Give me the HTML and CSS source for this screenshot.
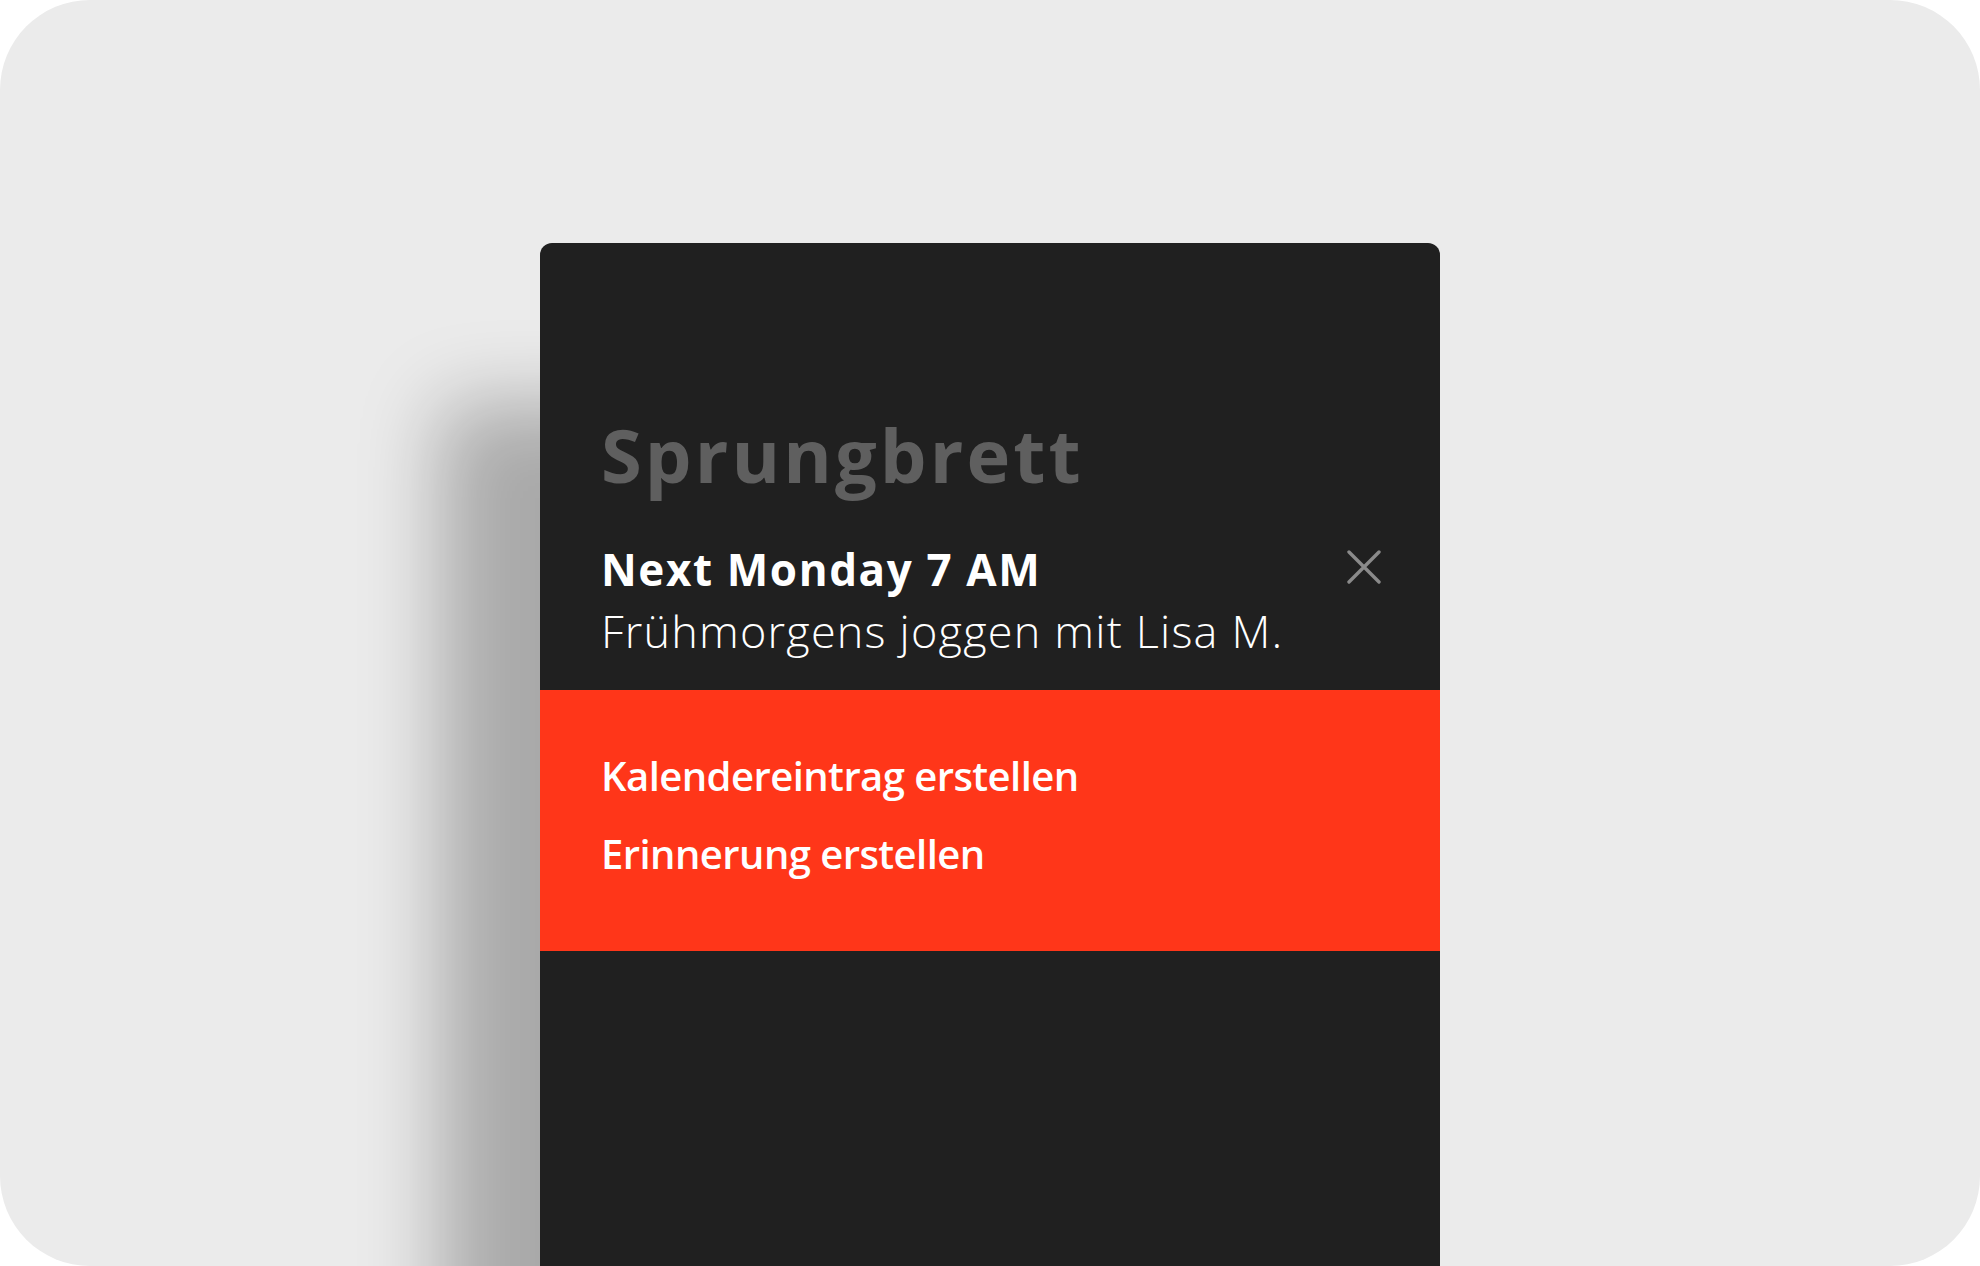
FILE: index.html
```html
<!DOCTYPE html>
<html lang="de">
<head>
<meta charset="utf-8">
<title>Sprungbrett</title>
<link rel="stylesheet" href="styles.css">
</head>
<body>
<div class="frame">
  <section class="panel">
    <div class="head">
      <h1 class="title">Sprungbrett</h1>
      <div class="when-row">
        <div class="when">Next Monday 7 AM</div>
        <button class="close" aria-label="Schließen">
          <svg width="34" height="34" viewBox="0 0 34 34"><path d="M2 2 L32 32 M32 2 L2 32" stroke="#8a8a8a" stroke-width="3.4" stroke-linecap="round" fill="none"/></svg>
        </button>
      </div>
      <div class="what">Frühmorgens joggen mit Lisa M.</div>
    </div>
    <div class="actions">
      <div class="action">Kalendereintrag erstellen</div>
      <div class="action">Erinnerung erstellen</div>
    </div>
  </section>
</div>
</body>
</html>
```
FILE: styles.css
```css
html, body {
  margin: 0;
  padding: 0;
  background: #ffffff;
  overflow: hidden;
}
.frame {
  width: 1980px;
  height: 1266px;
  background: #ebebeb;
  border-radius: 90px;
  overflow: hidden;
  display: flex;
  justify-content: center;
  align-items: flex-start;
  padding-top: 243px;
  box-sizing: border-box;
  font-family: "Open Sans", "Noto Sans", sans-serif;
}
.panel {
  width: 900px;
  height: 1100px;
  flex: none;
  background: #202020;
  border-radius: 12px 12px 0 0;
  box-shadow: -100px 160px 80px rgba(0, 0, 0, 0.28);
}
.head {
  padding: 172px 59px 26px 61px;
}
.title {
  margin: 0;
  font-size: 74px;
  line-height: 80px;
  font-weight: 700;
  color: #5f5f5f;
  letter-spacing: 3.1px;
}
.when-row {
  margin-top: 46px;
  display: flex;
  align-items: center;
  justify-content: space-between;
}
.when {
  font-size: 44px;
  line-height: 56px;
  font-weight: 700;
  color: #ffffff;
  letter-spacing: 1.6px;
}
.close {
  background: none;
  border: 0;
  padding: 0;
  width: 34px;
  height: 34px;
  margin-bottom: 4px;
  display: flex;
  cursor: pointer;
}
.what {
  font-size: 45px;
  line-height: 67px;
  font-weight: 350;
  color: #ffffff;
  letter-spacing: 1.2px;
}
.actions {
  background: #ff3619;
  padding: 47px 61px 58px;
}
.action {
  font-size: 40px;
  line-height: 78px;
  font-weight: 560;
  color: #ffffff;
  letter-spacing: -0.55px;
}
```
